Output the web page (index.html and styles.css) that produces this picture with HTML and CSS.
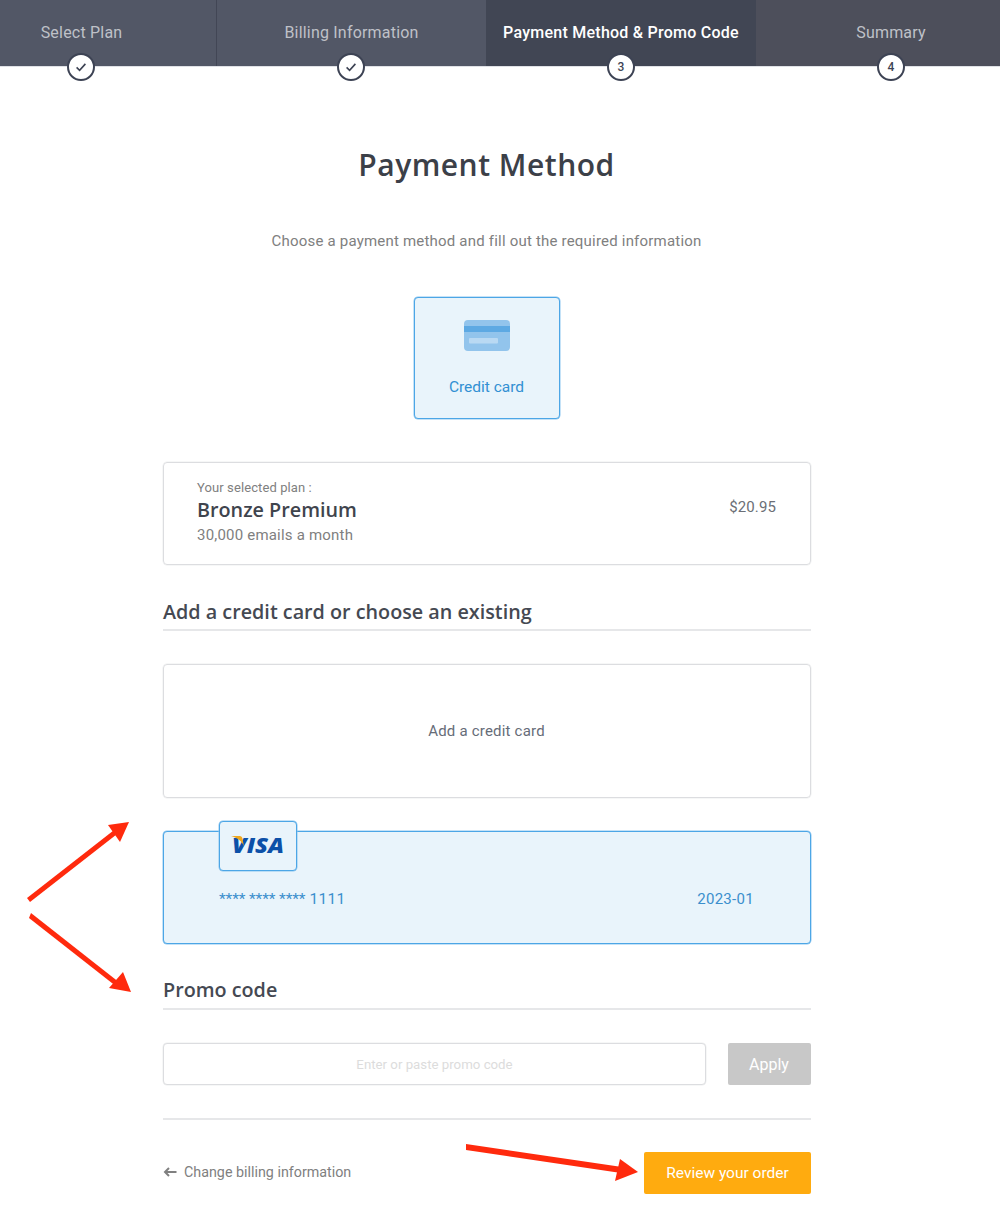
FILE: index.html
```html
<!DOCTYPE html>
<html lang="en">
<head>
<meta charset="utf-8">
<title>Payment Method</title>
<link rel="stylesheet" href="styles.css">
</head>
<body>
<div class="page">
  <header class="stepper-wrap">
    <nav class="stepper">
      <div class="step step-one"><span>Select Plan</span>
        <i class="badge"><svg width="14" height="14" viewBox="0 0 14 14"><path d="M2.6 7.4 5.6 10.3 11.4 3.9" fill="none" stroke="#3d4354" stroke-width="1.6"/></svg></i></div>
      <div class="step step-two"><span>Billing Information</span>
        <i class="badge"><svg width="14" height="14" viewBox="0 0 14 14"><path d="M2.6 7.4 5.6 10.3 11.4 3.9" fill="none" stroke="#3d4354" stroke-width="1.6"/></svg></i></div>
      <div class="step step-active"><span>Payment Method &amp; Promo Code</span><i class="badge">3</i></div>
      <div class="step step-last"><span>Summary</span><i class="badge">4</i></div>
    </nav>
  </header>

  <main class="main">
    <h1 class="title">Payment Method</h1>
    <p class="subtitle">Choose a payment method and fill out the required information</p>

    <div class="tile">
      <svg class="tile-icon" width="46" height="31" viewBox="0 0 46 31">
        <rect width="46" height="31" rx="4" fill="#92c4ec"/>
        <rect y="6" width="46" height="6" fill="#5da9e3"/>
        <rect x="5" y="18" width="29" height="5.5" rx="1" fill="#b9d9f3"/>
      </svg>
      <span>Credit card</span>
    </div>

    <section class="plan">
      <div>
        <div class="plan-label">Your selected plan :</div>
        <div class="plan-name">Bronze Premium</div>
        <div class="plan-desc">30,000 emails a month</div>
      </div>
      <div class="plan-price">$20.95</div>
    </section>

    <h2 class="section-title first">Add a credit card or choose an existing</h2>

    <div class="add-card">Add a credit card</div>

    <div class="saved-card">
      <div class="visa-tab">
        <svg class="visa-logo" width="60" height="28" viewBox="0 0 60 28">
          <text class="visa-text" x="4" y="21" textLength="52" lengthAdjust="spacingAndGlyphs">VISA</text>
          <path d="M3 4H11.6C13.4 4.1 14 5 14.4 6.4L16 14.5C14.2 9.2 9.6 5.8 3 4Z" fill="#f0a81e"/>
        </svg>
      </div>
      <div class="card-row">
        <span class="card-num"><span class="card-stars">**** **** ****</span> 1111</span>
        <span class="card-exp">2023-01</span>
      </div>
    </div>

    <h2 class="section-title promo">Promo code</h2>

    <form class="promo-row">
      <input class="promo-input" type="text" placeholder="Enter or paste promo code">
      <button class="apply" type="button">Apply</button>
    </form>

    <footer class="footer">
      <a class="back">
        <svg width="14" height="10" viewBox="0 0 14 10"><path d="M13.5 5H2.5M6 1 2 5 6 9" fill="none" stroke="#808080" stroke-width="2"/></svg>
        Change billing information
      </a>
      <button class="review" type="button">Review your order</button>
    </footer>
  </main>

  <svg class="arrows" width="1000" height="1219" viewBox="0 0 1000 1219">
    <g fill="#ff2a0d">
      <path d="M27 898 118 827 121 831 30 902Z"/>
      <path d="M108 825 129 822 120 842Z"/>
      <path d="M31 913 120 983 117 987 29 918Z"/>
      <path d="M123 972 131 992 109 988Z"/>
      <path d="M466 1144 622 1167 621 1173 466 1150Z"/>
      <path d="M620 1159 638 1172 615 1181Z"/>
    </g>
  </svg>
</div>
</body>
</html>
```
FILE: styles.css
```css
* { box-sizing: border-box; }
html, body { margin: 0; padding: 0; background: #fff; }
body { font-family: Roboto, "Liberation Sans", sans-serif; color: #3f444d; }
.page { position: relative; width: 1000px; height: 1219px; overflow: hidden; }

.stepper-wrap { height: 82px; }
.stepper { display: flex; width: 1080px; margin-left: -54px; height: 66px; background: #525766; box-shadow: 0 1px 0 #dfe1e6; }
.step { position: relative; width: 270px; height: 66px; display: flex; justify-content: center; padding-top: 23px; font-size: 16px; line-height: 20px; letter-spacing: .2px; color: #bfc1c8; background: #525766; }
.step-one { padding-left: 1px; }
.step-two { border-left: 1px solid #424655; }
.step-active { background: #414654; color: #fff; font-weight: 500; letter-spacing: .25px; }
.step-last { background: #4d4f5b; }
.badge { position: absolute; left: 50%; top: 53px; width: 28px; height: 28px; margin-left: -14px; border-radius: 50%; border: 2px solid #3d4354; background: #fff; display: flex; align-items: center; justify-content: center; font-style: normal; font-size: 12px; font-weight: 500; letter-spacing: 0; color: #3d4354; }
.step-two .badge { margin-left: -14.5px; }

.main { width: 648px; margin-left: 163px; display: flex; flex-direction: column; }
.title { margin: 62px 0 0; height: 42px; font: 600 30px/42px "Open Sans", sans-serif; text-align: center; color: #3c4048; letter-spacing: .5px; padding-right: 1px; }
.subtitle { margin: 45px 0 0; height: 20px; font-size: 15px; line-height: 20px; letter-spacing: .2px; text-align: center; color: #808080; padding-right: 1px; }

.tile { width: 146px; height: 122px; margin: 46px 0 0 251px; border: 1px solid #4ca6e6; box-shadow: 0 0 0 .5px #8cc5ef; border-radius: 4px; background: #e9f4fb; display: flex; flex-direction: column; align-items: center; padding: 22px 1px 0 0; color: #3290d3; font-size: 15.5px; line-height: 20px; }
.tile-icon { margin-bottom: 26px; }

.plan { height: 103px; margin-top: 43px; border: 1px solid #dcdde0; box-shadow: 0 0 0 .5px #eeeff0; border-radius: 4px; padding: 16px 34px 0 33px; display: flex; justify-content: space-between; }
.plan-label { font-size: 13px; line-height: 18px; letter-spacing: .1px; color: #808080; }
.plan-name { font: 600 19.75px/27px "Open Sans", sans-serif; color: #3f444d; margin-top: -1px; }
.plan-desc { font-size: 15px; line-height: 20px; letter-spacing: .2px; color: #808080; margin-top: 2px; }
.plan-price { font-size: 15px; line-height: 20px; letter-spacing: .1px; color: #6b6f76; margin-top: 18px; }

.section-title { margin: 0; font: 600 19.75px/28px "Open Sans", sans-serif; color: #454952; border-bottom: 2px solid #e6e7e9; height: 37px; }
.section-title.first { margin-top: 33px; height: 33px; }
.add-card { height: 134px; margin-top: 33px; border: 1px solid #dcdde0; box-shadow: 0 0 0 .5px #eeeff0; border-radius: 4px; display: flex; align-items: center; justify-content: center; font-size: 15px; letter-spacing: .2px; color: #666c78; padding-right: 1px; }

.saved-card { position: relative; height: 113px; margin-top: 33px; border: 1px solid #4ca6e6; box-shadow: 0 0 0 .5px #8cc5ef; border-radius: 4px; background: #e9f4fb; padding: 56px 56px 0 55px; }
.visa-tab { position: absolute; left: 55px; top: -11px; width: 78px; height: 50px; border: 1px solid #4ca6e6; box-shadow: 0 0 0 .5px #8cc5ef; border-radius: 4px; background: #e9f4fb; display: flex; align-items: center; justify-content: center; }
.visa-logo { overflow: visible; }
.visa-text { font: italic 800 21px "Open Sans", sans-serif; fill: #0c50a8; }
.card-row { display: flex; justify-content: space-between; color: #3b8fcd; font-size: 15.5px; line-height: 22px; letter-spacing: .3px; }
.card-stars { letter-spacing: -.1px; }
.card-exp { letter-spacing: .3px; font-size: 15px; }

.section-title.promo { margin-top: 32px; height: 34px; }
.promo-row { display: flex; justify-content: space-between; margin-top: 33px; }
.promo-input { width: 543px; height: 42px; border: 1px solid #dcdde0; box-shadow: 0 0 0 .5px #eeeff0; border-radius: 4px; background: #fff; text-align: center; font: 13.25px Roboto, sans-serif; outline: none; padding: 0; }
.promo-input::placeholder { color: #dcdcdc; opacity: 1; }
.apply { width: 83px; height: 42px; border: 0; border-radius: 2px; background: #c8c8c8; color: #fff; font: 16px Roboto, sans-serif; padding: 0 1px 0 0; }

.footer { display: flex; justify-content: space-between; align-items: center; margin-top: 33px; padding-top: 32px; border-top: 2px solid #e6e7e9; }
.back { display: flex; align-items: center; gap: 7px; color: #808080; font-size: 14.3px; padding-bottom: 2px; }
.review { width: 167px; height: 42px; border: 0; border-radius: 2px; background: #ffab0f; color: #fff; font: 15.5px Roboto, sans-serif; }

.arrows { position: absolute; left: 0; top: 0; pointer-events: none; }
```
